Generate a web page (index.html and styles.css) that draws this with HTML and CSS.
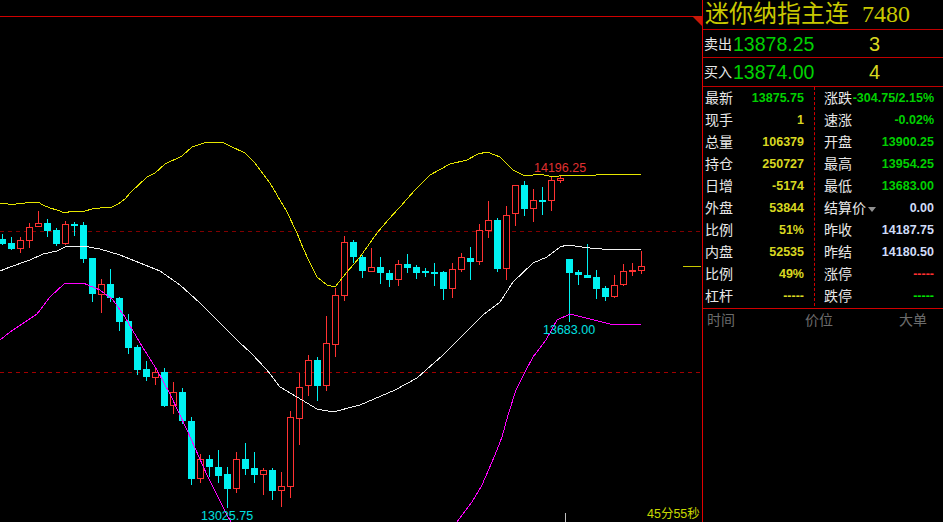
FILE: index.html
```html
<!DOCTYPE html>
<html lang="zh-CN">
<head>
  <meta charset="UTF-8" />
  <meta name="viewport" content="width=device-width, initial-scale=1.0"/>
  <title>迷你纳指主连 7480</title>
  <link rel="stylesheet" href="styles.css">
</head>
<body>

  <div class="terminal">
    <!-- K line chart, drawn by chart.js -->
    <div class="chart">
      <svg id="chartSvg" width="702" height="522" viewBox="0 0 702 522"></svg>
    </div>

    <!-- Quote panel -->
    <div class="panel">
      <div class="title">
        <span class="title-name">迷你纳指主连</span>
        <span class="title-code">7480</span>
      </div>

      <div class="book">
        <span class="book-label">卖出</span>
        <span class="book-price">13878.25</span>
        <span class="book-qty">3</span>
      </div>
      <div class="book">
        <span class="book-label">买入</span>
        <span class="book-price">13874.00</span>
        <span class="book-qty">4</span>
      </div>

      <div class="quotes">
        <div class="col col-left">
          <div class="row"><span>最新</span><b class="green">13875.75</b></div>
          <div class="row"><span>现手</span><b class="yellow">1</b></div>
          <div class="row"><span>总量</span><b class="yellow">106379</b></div>
          <div class="row"><span>持仓</span><b class="yellow">250727</b></div>
          <div class="row"><span>日增</span><b class="yellow">-5174</b></div>
          <div class="row"><span>外盘</span><b class="yellow">53844</b></div>
          <div class="row"><span>比例</span><b class="yellow">51%</b></div>
          <div class="row"><span>内盘</span><b class="yellow">52535</b></div>
          <div class="row"><span>比例</span><b class="yellow">49%</b></div>
          <div class="row"><span>杠杆</span><b class="yellow">-----</b></div>
        </div>
        <div class="col col-right">
          <div class="row"><span>涨跌</span><b class="green">-304.75/2.15%</b></div>
          <div class="row"><span>速涨</span><b class="green">-0.02%</b></div>
          <div class="row"><span>开盘</span><b class="green">13900.25</b></div>
          <div class="row"><span>最高</span><b class="green">13954.25</b></div>
          <div class="row"><span>最低</span><b class="green">13683.00</b></div>
          <div class="row"><span>结算价<i class="caret"></i></span><b class="pale">0.00</b></div>
          <div class="row"><span>昨收</span><b class="pale">14187.75</b></div>
          <div class="row"><span>昨结</span><b class="pale">14180.50</b></div>
          <div class="row"><span>涨停</span><b class="red">-----</b></div>
          <div class="row"><span>跌停</span><b class="lime">-----</b></div>
        </div>
      </div>

      <div class="ticks-head">
        <span>时间</span>
        <span>价位</span>
        <span>大单</span>
      </div>
    </div>
  </div>

  <script src="chart.js"></script>
</body>
</html>
```

FILE: styles.css
```css
html, body {
  margin: 0;
  height: 100%;
  background: #000;
  overflow: hidden;
}
.terminal {
  display: flex;
  width: 943px;
  height: 522px;
  font-family: "Liberation Sans", "Noto Sans CJK SC", sans-serif;
  color: #e8e8e8;
}
.chart {
  width: 702px;
  height: 522px;
  flex: none;
}
.chart svg {
  display: block;
}
.chart-label {
  font-family: "Liberation Sans", sans-serif;
  font-size: 12.5px;
}
.chart-clock {
  font-family: "Liberation Sans", "Noto Sans CJK SC", sans-serif;
  font-size: 12.5px;
}
.panel {
  flex: 1;
  border-left: 1px solid #e00000;
}
.title {
  height: 29px;
  display: flex;
  align-items: center;
  padding-left: 2px;
  border-bottom: 1px solid #c00000;
  color: #c8c800;
  font-family: "Liberation Serif", "Noto Sans CJK SC", serif;
  font-size: 24px;
  line-height: 29px;
}
.title-name {
  width: 157px;
}
.book {
  height: 26px;
  display: flex;
  align-items: center;
  padding: 1px 0 0 1px;
  border-bottom: 1px solid #c00000;
}
.book + .book {
  height: 27px;
}
.book-label {
  width: 29px;
  margin-bottom: 3px;
  font-size: 14px;
}
.book-price {
  width: 136px;
  color: #00d000;
  font-size: 19.5px;
}
.book-qty {
  color: #d8d820;
  font-size: 20px;
}
.quotes {
  display: flex;
  height: 221px;
  border-bottom: 1px solid #d00000;
}
.col {
  height: 219px;
  display: flex;
  flex-direction: column;
}
.col-left {
  width: 112px;
  padding: 0 10px 0 2px;
  box-sizing: border-box;
  border-right: 1px dashed #d00000;
}
.col-right {
  width: 128px;
  padding: 0 9px;
  box-sizing: border-box;
}
.row {
  flex: 1;
  display: flex;
  justify-content: space-between;
  align-items: center;
  font-size: 14px;
  white-space: nowrap;
}
.row span {
  margin-bottom: 2px;
}
.row b {
  font-size: 12.5px;
}
.caret {
  display: inline-block;
  width: 0;
  height: 0;
  margin-left: 2px;
  border-left: 4px solid transparent;
  border-right: 4px solid transparent;
  border-top: 5px solid #909090;
  vertical-align: middle;
}
.green { color: #00d000; }
.yellow { color: #d8d820; }
.pale { color: #d0dcf8; }
.red { color: #ff3030; }
.lime { color: #00e000; }
.ticks-head {
  display: flex;
  justify-content: space-between;
  padding: 0 16px 0 4px;
  color: #6c6c6c;
  font-size: 14px;
}
.ticks-head span:nth-child(2) {
  margin-left: 4px;
}
```

FILE: chart.js
```js
// [center x, wick top, body top, body bottom, wick bottom, up?]
const candles = [
  [2, 234, 239, 244, 245, 0], [11, 237, 243, 249, 250, 0], [20, 237, 240, 249, 253, 1],
  [29, 223, 227, 241, 248, 1], [38, 211, 223, 227, 227, 1], [47, 219, 223, 231, 237, 0],
  [56, 228, 230, 244, 246, 0], [65, 221, 224, 244, 245, 1], [74, 222, 224, 226, 236, 0],
  [83, 222, 225, 259, 263, 0], [92, 258, 258, 294, 302, 0], [101, 279, 284, 295, 313, 1],
  [110, 269, 284, 298, 302, 0], [119, 297, 298, 322, 331, 0], [128, 314, 321, 348, 354, 0],
  [137, 345, 347, 370, 375, 0], [146, 361, 369, 377, 381, 0], [155, 367, 372, 378, 385, 1],
  [164, 368, 372, 406, 407, 0], [173, 382, 392, 406, 414, 1], [182, 388, 392, 421, 424, 0],
  [191, 417, 421, 479, 485, 0], [200, 454, 459, 479, 483, 1], [209, 455, 459, 467, 477, 0],
  [218, 450, 467, 476, 483, 0], [227, 467, 474, 489, 508, 0], [236, 452, 459, 489, 493, 1],
  [245, 443, 459, 469, 475, 0], [254, 452, 468, 475, 483, 0], [263, 468, 470, 475, 495, 1],
  [272, 468, 470, 491, 500, 0], [281, 472, 486, 491, 507, 1], [290, 411, 417, 487, 498, 1],
  [299, 373, 387, 419, 445, 1], [308, 355, 360, 386, 396, 1], [317, 357, 360, 386, 401, 0],
  [326, 316, 343, 386, 391, 1], [335, 288, 295, 345, 357, 1], [344, 236, 242, 296, 301, 1],
  [353, 240, 242, 257, 263, 0], [362, 255, 257, 271, 278, 0], [371, 248, 267, 272, 272, 1],
  [380, 257, 267, 273, 284, 0], [389, 270, 273, 280, 287, 0], [398, 260, 264, 280, 286, 1],
  [407, 254, 264, 268, 273, 0], [416, 265, 267, 273, 279, 0], [425, 268, 271, 273, 277, 0],
  [434, 263, 272, 274, 286, 0], [443, 271, 272, 289, 300, 0], [452, 263, 269, 289, 298, 1],
  [461, 253, 257, 270, 272, 1], [470, 247, 258, 262, 280, 0], [479, 224, 230, 262, 265, 1],
  [488, 201, 220, 231, 238, 1], [497, 218, 220, 269, 272, 0], [506, 206, 215, 269, 280, 1],
  [515, 185, 185, 214, 226, 1], [524, 181, 185, 209, 216, 0], [533, 189, 200, 209, 222, 1],
  [542, 187, 200, 202, 215, 0], [551, 177, 180, 201, 211, 1], [560, 175, 178, 181, 183, 1],
  [569, 259, 259, 273, 322, 0], [578, 270, 272, 275, 285, 0], [587, 244, 275, 278, 278, 0],
  [596, 270, 277, 289, 299, 0], [605, 286, 288, 297, 301, 0], [614, 275, 285, 297, 298, 1],
  [623, 264, 271, 285, 286, 1], [632, 263, 270, 272, 276, 1], [641, 251, 266, 271, 274, 1]
];

const upperBand = "0,203 8,204 16,204 25,203 38,202 43,205 50,208 57,210 65,213 72,211 85,211 92,209 100,208 112,207 118,204 125,199 130,193 147,177 155,173 165,164 182,156 192,147 207,142 222,142 230,146 245,153 255,163 270,183 287,212 297,233 303,248 310,263 317,277 327,285 335,287 347,272 360,257 377,233 388,220 400,207 415,190 430,175 450,164 467,160 478,154 487,152 500,157 513,170 523,175 533,175 540,174 553,177 565,175 590,176 602,174 641,174";
const middleBand = "0,271 10,267 30,260 43,254 57,251 65,247 83,246 100,249 120,255 140,263 160,271 180,285 200,303 220,323 240,343 250,352 267,370 280,387 297,397 317,409 333,412 360,405 395,390 417,378 443,355 463,335 483,315 500,302 513,282 533,263 547,257 560,247 567,245 590,248 602,249 641,249";
const lowerBandA = "0,340 10,332 37,314 50,297 65,283 83,283 100,290 113,300 125,317 140,343 157,370 170,394 187,430 207,475 227,515 231,522";
const lowerBandB = "457,522 472,502 482,485 495,455 502,437 508,415 516,390 525,372 533,357 546,340 557,320 570,314 590,319 610,324 641,324";

const UP = "#ff3232";
const DOWN = "#00f2f2";
let out = "";

function rect(x, y, w, h, fill) {
  return `<rect x="${x}" y="${y}" width="${w}" height="${h}" fill="${fill}"/>`;
}

function band(points, color) {
  return `<polyline points="${points}" fill="none" stroke="${color}" stroke-width="1" shape-rendering="crispEdges"/>`;
}

function label(x, y, text, color, cls) {
  return `<text x="${x}" y="${y}" fill="${color}" class="${cls || "chart-label"}">${text}</text>`;
}

// frame and reference lines
out += rect(0, 16, 702, 1, "#d00000");
out += `<polygon points="692,16 702,16 702,26" fill="#c81808"/>`;
out += `<line x1="0" y1="231.5" x2="702" y2="231.5" stroke="#800000" stroke-dasharray="4 4"/>`;
out += `<line x1="0" y1="372.5" x2="702" y2="372.5" stroke="#a00000" stroke-dasharray="4 4"/>`;
out += rect(683, 266, 18, 1, "#c8c800");
out += rect(565, 513, 1, 9, "#c0c0c0");

candles.forEach(([x, high, top, bottom, low, up]) => {
  const color = up ? UP : DOWN;
  out += rect(x, high, 1, low - high, color);
  if (up) {
    out += rect(x - 3, top, 7, bottom - top, "#000");
    out += `<rect x="${x - 2.5}" y="${top + 0.5}" width="6" height="${bottom - top - 1}" fill="none" stroke="${color}"/>`;
  } else {
    out += rect(x - 3, top, 7, bottom - top, color);
  }
});

out += band(upperBand, "#e6e600");
out += band(middleBand, "#f0f0f0");
out += band(lowerBandA, "#ff00ff");
out += band(lowerBandB, "#ff00ff");

out += label(534, 172, "14196.25", "#e03030");
out += label(543, 334, "13683.00", "#00e0e0");
out += label(201, 520, "13025.75", "#00e0e0");
out += label(647, 518, "45分55秒", "#c8d800", "chart-clock");

document.getElementById("chartSvg").innerHTML = out;
```
